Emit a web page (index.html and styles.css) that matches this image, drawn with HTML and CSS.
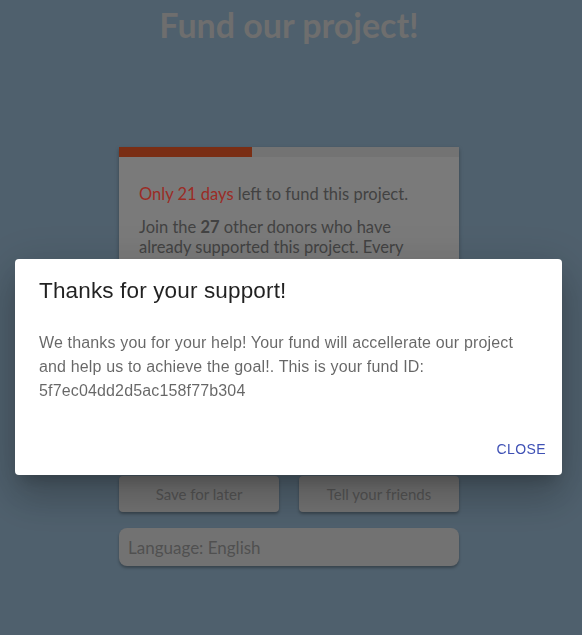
FILE: index.html
```html
<!DOCTYPE html>
<html lang="en">
<head>
<meta charset="utf-8">
<title>Fund our project</title>
<link rel="stylesheet" href="styles.css">
</head>
<body>
<main class="page">
  <h1 class="title">Fund our project!</h1>
  <section class="card">
    <div class="progress"><div class="progress-fill" style="width:39%"></div></div>
    <div class="card-body">
      <p class="deadline"><span class="accent">Only 21 days</span> left to fund this project.</p>
      <p class="info">Join the <strong>27</strong> other donors who have already supported this project. Every dollar helps.</p>
      <div class="give">
        <div class="amount"><span class="currency">$</span><span class="value">50</span></div>
        <button class="give-btn" type="button">Give Now</button>
      </div>
      <p class="why">Why give $50?</p>
    </div>
  </section>
  <div class="actions">
    <button class="action" type="button">Save for later</button>
    <button class="action" type="button">Tell your friends</button>
  </div>
  <div class="language">Language: English</div>
</main>

<div class="backdrop"></div>
<div class="dialog" role="dialog">
  <h2 class="dialog-title">Thanks for your support!</h2>
  <div class="dialog-content">
    <p class="dialog-text">We thanks you for your help! Your fund will accellerate our project and help us to achieve the goal!. This is your fund ID: 5f7ec04dd2d5ac158f77b304</p>
  </div>
  <div class="dialog-actions">
    <button class="close-btn" type="button">Close</button>
  </div>
</div>
</body>
</html>
```

FILE: styles.css
```css
html, body {
  margin: 0;
  padding: 0;
}

body {
  background: #7a94a8;
  font-family: Lato, "Noto Sans", sans-serif;
  height: 635px;
  overflow: hidden;
}

.page {
  width: 578px;
  display: flex;
  flex-direction: column;
  align-items: center;
}

.title {
  margin: 5px 0 0;
  font-size: 34px;
  line-height: 40px;
  font-weight: 700;
  color: #a9a9a9;
}

.card {
  margin-top: 102px;
  width: 340px;
  background: #bcbcbc;
  box-shadow: 0 2px 4px rgba(0, 0, 0, 0.3);
}

.progress {
  height: 10px;
  background: #b1b1b1;
}

.progress-fill {
  height: 100%;
  background: #bc471f;
}

.card-body {
  box-sizing: border-box;
  min-height: 299px;
  padding: 27px 20px 20px;
  color: #666;
  font-size: 16.5px;
  line-height: 20px;
}

.card-body p {
  margin: 0 0 13px;
}

.accent {
  color: #ed443a;
}

.info strong {
  font-weight: 700;
}

.give {
  display: flex;
  gap: 10px;
  margin: 20px 0 16px;
}

.amount {
  flex: 1;
  height: 36px;
  border: 1px solid #9a9a9a;
  border-radius: 4px;
  display: flex;
  align-items: center;
  gap: 6px;
  padding: 0 10px;
}

.give-btn {
  width: 110px;
  height: 38px;
  border: 0;
  border-radius: 4px;
  background: #bc471f;
  color: #ddd;
  font: inherit;
}

.why {
  color: #5a6d80;
}

.actions {
  margin-top: 20px;
  width: 340px;
  display: flex;
  gap: 20px;
}

.action {
  flex: 1;
  height: 36px;
  border: 0;
  border-radius: 4px;
  background: #b0b0b0;
  color: #808080;
  font-family: Lato, "Noto Sans", sans-serif;
  font-size: 15px;
  box-shadow: 0 2px 3px rgba(0, 0, 0, 0.3);
}

.language {
  margin-top: 16px;
  width: 331px;
  height: 38px;
  padding-left: 9px;
  display: flex;
  align-items: center;
  border-radius: 8px;
  background: #b0b0b0;
  color: #7c7c7c;
  font-size: 17px;
  box-shadow: 0 2px 3px rgba(0, 0, 0, 0.3);
}

.backdrop {
  position: fixed;
  inset: 0;
  background: rgba(0, 0, 0, 0.35);
}

.dialog {
  position: fixed;
  top: 259px;
  left: 15px;
  width: 547px;
  background: #fff;
  border-radius: 4px;
  font-family: "Liberation Sans", Arial, sans-serif;
  box-shadow: 0 11px 15px -7px rgba(0, 0, 0, 0.2), 0 24px 38px 3px rgba(0, 0, 0, 0.14), 0 9px 46px 8px rgba(0, 0, 0, 0.12);
}

.dialog-title {
  margin: 0;
  padding: 16px 24px;
  font-size: 22.5px;
  line-height: 32px;
  font-weight: 400;
  letter-spacing: 0.15px;
  color: rgba(0, 0, 0, 0.87);
}

.dialog-content {
  padding: 8px 24px;
}

.dialog-text {
  margin: 0 0 12px;
  font-size: 16px;
  line-height: 24px;
  letter-spacing: 0.15px;
  color: rgba(0, 0, 0, 0.6);
}

.dialog-actions {
  padding: 8px;
  display: flex;
  justify-content: flex-end;
}

.close-btn {
  height: 36px;
  padding: 6px 8px;
  border: 0;
  background: none;
  color: #3f51b5;
  font-family: "Liberation Sans", Arial, sans-serif;
  font-size: 14px;
  letter-spacing: 0.4px;
  text-transform: uppercase;
}
```
